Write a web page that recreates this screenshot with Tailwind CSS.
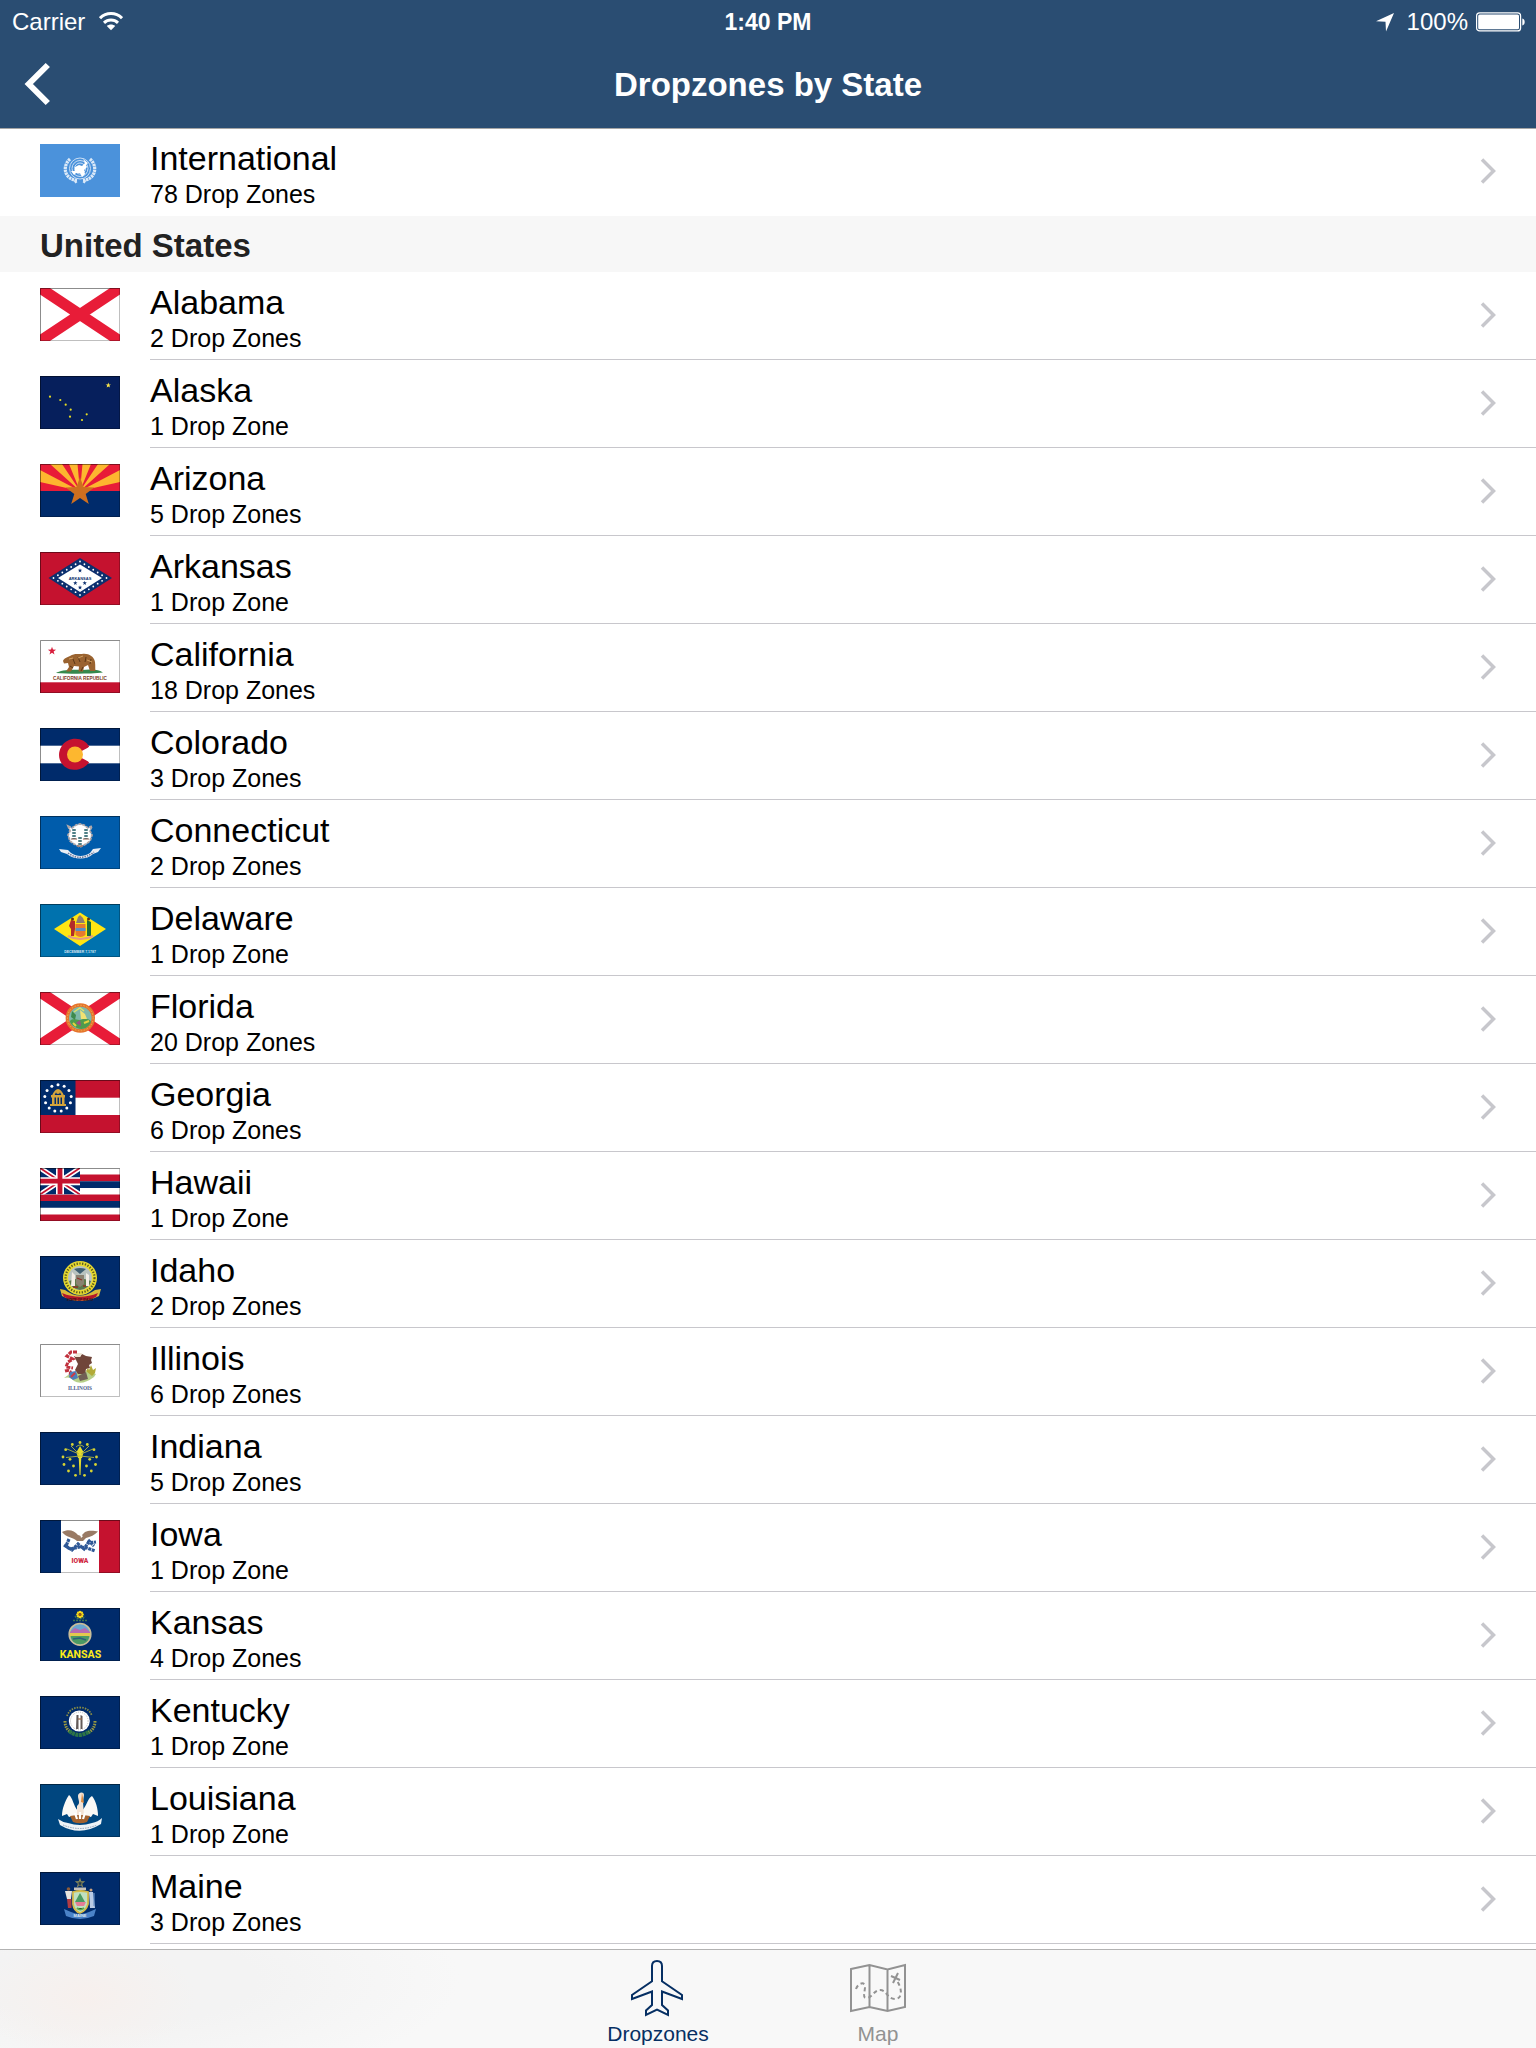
<!DOCTYPE html>
<html lang="en">
<head>
<meta charset="utf-8">
<meta name="viewport" content="width=device-width, initial-scale=1">
<title>Dropzones by State</title>
<script src="https://cdn.jsdelivr.net/npm/@tailwindcss/browser@4"></script>
</head>
<body class="flex min-h-screen flex-col bg-white font-['Liberation_Sans',Arial,sans-serif] text-black">

<header class="sticky top-0 z-10 bg-[#2a4d72] text-white shadow-[0_1px_0_#a5a5a5]">
  <div class="grid h-10 grid-cols-3 items-center px-3 pt-0.5 text-[24px] leading-10">
    <div class="flex items-center gap-3.5">
      <span>Carrier</span>
      <svg class="h-5 w-6" viewBox="0 0 24 20" fill="none" stroke="#fff" stroke-width="3" role="img" aria-label="Wi-Fi">
        <path d="M1 6.200C7.200 0 16.800 0 23 6.200"/>
        <path d="M5 10.800C9 7 15 7 19 10.800"/>
        <path d="M7.800 14C10.200 12 13.800 12 16.200 14L12 18.300Z" fill="#fff" stroke="none"/>
      </svg>
    </div>
    <div class="text-center text-[23px] font-bold">1:40 PM</div>
    <div class="flex items-center justify-end gap-2">
      <svg class="mr-1 size-5" viewBox="0 0 20 20" fill="#fff" role="img" aria-label="Location"><path d="M19 1L11 19.500L10.500 9.700L1 9.200Z"/></svg>
      <span>100%</span>
      <svg class="-mr-0.5 h-5 w-[50px]" viewBox="0 0 50 20" role="img" aria-label="Battery full">
        <rect x="0.600" y="0.900" width="44" height="18" rx="3" fill="none" stroke="#fff" stroke-width="1.200"/>
        <rect x="2.200" y="2.500" width="40.800" height="14.800" rx="1.500" fill="#fff"/>
        <path d="M46.300 6.500C49.500 7 49.500 13 46.300 13.500Z" fill="#fff"/>
      </svg>
    </div>
  </div>
  <div class="grid h-22 grid-cols-[80px_1fr_80px] items-center">
    <button type="button" aria-label="Back" class="flex h-22 items-center pl-6">
      <svg class="h-11 w-7" viewBox="0 0 28 44" fill="none" stroke="#fff" stroke-width="6"><path d="M23.800 3L4.800 22L23.800 41"/></svg>
    </button>
    <h1 class="pt-0.5 text-center text-[33px] leading-[86px] font-bold">Dropzones by State</h1>
  </div>
</header>

<main class="flex-1">
  <ul id="international"></ul>
  <h2 class="bg-[#f7f7f7] px-10 pt-1 text-[33px] leading-[52px] font-bold text-[#222]">United States</h2>
  <ul id="states"></ul>
</main>

<nav class="sticky bottom-0 flex justify-center gap-[68px] border-t border-[#b2b2b2] bg-[#f8f8f8] bg-[radial-gradient(110px_60px_at_86px_48px,#f7f0ed_0%,#f7f0ed00_100%),radial-gradient(340px_110px_at_120px_30px,#f3f3f3_0%,#f3f3f3_40%,#f8f8f8_100%)] pt-2 pb-0.5 text-[21px] leading-6">
  <a href="#dropzones" aria-current="page" class="flex w-[152px] flex-col items-center gap-1 text-[#062f63]">
    <svg class="size-[60px]" viewBox="0 0 60 60" fill="none" stroke="currentColor" stroke-width="2">
      <path d="M29 3C25.500 3 24 5.500 24 8V23.300L4 37V41L24 33.500V47L18 52.500V57L29 51.500L40 57V52.500L34 47V33.500L54 41V37L34 23.300V8C34 5.500 32.500 3 29 3Z"/>
    </svg>
    <span>Dropzones</span>
  </a>
  <a href="#map" class="flex w-[152px] flex-col items-center gap-1 text-[#929292]">
    <svg class="size-[60px]" viewBox="0 0 60 60" fill="none" stroke="currentColor" stroke-width="2">
      <path d="M3 11L21.500 7L39.500 11.500L57 7V49L39.500 53L21.500 49L3 53ZM21.500 7V49M39.500 11.500V53"/>
      <path d="M8 31C10 25 17 23 17 29C17 34 14 40 18.500 40C24 40 26 32 32 32C39 32 39 41 47 41C55 41 54 30 49 23" stroke-dasharray="4 3"/>
      <path d="M43 18L52 22M50 15L45 25"/>
    </svg>
    <span>Map</span>
  </a>
</nav>

<script>
const NAVY = '#002b6b';
const star = (cx, cy, r, fill) => {
  const pts = [];
  for (let i = 0; i < 10; i++) {
    const a = -Math.PI / 2 + i * Math.PI / 5, q = i % 2 ? r * 0.4 : r;
    pts.push((cx + q * Math.cos(a)).toFixed(1) + ',' + (cy + q * Math.sin(a)).toFixed(1));
  }
  return `<polygon points="${pts.join(' ')}" fill="${fill}"/>`;
};
const dots = (list, r, fill) => list.map(([x, y]) => `<circle cx="${x}" cy="${y}" r="${r}" fill="${fill}"/>`).join('');
const ring = (n, cx, cy, r, from = -90) => Array.from({ length: n }, (_, i) => {
  const a = (from + i * 360 / n) * Math.PI / 180;
  return [cx + r * Math.cos(a), cy + r * Math.sin(a)];
});
const bg = c => `<rect width="80" height="53" fill="${c}"/>`;
const saltire = bg('#fff') + '<path d="M0 0L80 53M80 0L0 53" stroke="#e81c38" stroke-width="11"/>';
const along = (pts, n) => pts.flatMap(([x, y], k) => {
  const [u, v] = pts[(k + 1) % pts.length];
  return Array.from({ length: n }, (_, i) => [x + (u - x) * i / n, y + (v - y) * i / n]);
});

const flags = {
  International: bg('#4b92db') + `
    <g fill="none" stroke="#c9def5" stroke-width="1"><circle cx="40" cy="24.500" r="10.500"/><circle cx="40" cy="24.500" r="8"/><circle cx="40" cy="24.500" r="5.500"/></g>
    <path d="M30 15C22 22 24 35 37 36.500L34 38.500M50 15C58 22 56 35 43 36.500L46 38.500" fill="none" stroke="#dbe9f8" stroke-width="3.200" stroke-dasharray="2.400 0.600"/>
    <path d="M35 23L39 21L42 22L45 19L47 23L44 26L45 30L42 33L40 29L36 29L34 31L31 27L35 27ZM43 15L48 19L46 21Z" fill="#fff"/>`,
  Alabama: saltire,
  Alaska: bg('#061f5c') + star(68.3, 9.3, 2.8, '#ffe94a') + dots([[10, 20.7], [20.3, 24], [25.700, 28.700], [30.700, 33.700], [30, 40.700], [42, 44], [46.700, 38.300]], 1.1, '#e6dc24'),
  Arizona: bg('#e81c38') + `
    <path d="M40 27L0 6V18ZM40 27L10 0H22ZM40 27L29 0H37.500ZM40 27L42.500 0H51ZM40 27L58 0H70ZM40 27L80 6V18Z" fill="#fdb72f"/>
    <rect y="27" width="80" height="26" fill="${NAVY}"/>` + star(40, 28, 15, '#ce6f1f'),
  Arkansas: bg('#c5122f') + `
    <path d="M40 6L72 26L40 46.500L8.500 26Z" fill="#0c2f6e"/><path d="M40 12.500L62 26L40 40L18 26Z" fill="#fff"/>` +
    dots(along([[40, 9.500], [66.500, 26], [40, 43], [13.500, 26]], 6), 0.9, '#fff') +
    '<text x="40" y="27.500" text-anchor="middle" font-size="4" font-weight="700" fill="#0c2f6e">ARKANSAS</text>' +
    star(40, 18.500, 2.3, '#0c2f6e') + star(35.300, 31, 2.3, '#0c2f6e') + star(44.700, 31, 2.3, '#0c2f6e') + star(40, 35.500, 2.3, '#0c2f6e'),
  California: bg('#fff') + `<rect y="42.300" width="80" height="11" fill="#c5122f"/>` + star(12, 11, 4.3, '#d81e3c') + `
    <path d="M16 33C20 30 32 29 42 30C52 28.500 60 30 63 32.500C50 34 30 34 16 33Z" fill="#35894d"/>
    <path d="M23 21C24 18 27 17.500 30 16C35 12.500 39 14.500 42 14C48 13 54 16 55 22C55.500 26 55 28 55.500 31H50L48 25L44 27L43 31.500H38.500L39 26.500L34 26L31 31.500H26L29 27L28 23L24 23.500Z" fill="#9a6330"/>
    <path d="M33 19L35 24M38 17L40 22M46 17L45 22M51 19L50 24M30 26L33 28M43 27L41 31" stroke="#5b3716" stroke-width="1"/>
    <path d="M38 18L43 16M47 20L52 22M29 19L33 18" stroke="#d1a163" stroke-width="1"/>
    <text x="40" y="39.500" text-anchor="middle" font-size="4.700" font-weight="700" fill="#7c3722">CALIFORNIA REPUBLIC</text>`,
  Colorado: bg(NAVY) + `<rect y="17.700" width="80" height="17.600" fill="#fff"/>
    <path d="M49.300 19C44 8.500 28 8 21.500 18.500C15 29 22 41.500 34 41.800C40.500 42 46 39 49.300 34L35 26.500Z" fill="#c5122f"/><path d="M49.500 18.500L40 26.500L49.500 34.500Z" fill="#fff"/><circle cx="35" cy="26.500" r="8" fill="#fdb72f"/>`,
  Connecticut: bg('#005cab') + `
    <path d="M28 10L32 12L36 9L40 8L44 9L48 12L52 10L50 15L52 19L50 25L46 28L40 31L34 28L30 25L28 19L30 15Z" fill="#fff" stroke="#b0a7a8" stroke-width="1.800" stroke-dasharray="3 1"/>
    <path d="M34 13V23M46 13V23M40 21V30" stroke="#4f7f86" stroke-width="3.500" stroke-dasharray="2 1"/><path d="M31 23H37M43 23H49M37 30H43" stroke="#8c5a4d" stroke-width="1"/>
    <path d="M19 33L28 34L31 37C37 41 44 41 50 37L53 33L61 32L58 36L53 38C47 44 34 44 27 38L21 36Z" fill="#e9eef5"/><path d="M28 37C36 43 45 43 54 36" stroke="#6b789c" stroke-width="1.500" fill="none" stroke-dasharray="1.500 1"/>`,
  Delaware: bg('#0072ae') + `
    <path d="M40 8.500L66 25L40 42L14 25Z" fill="#ffe512"/>
    <path d="M35.500 20H45.500V31Q40.500 35 35.500 31Z" fill="#e67a2f"/><path d="M35.500 24H45.500V27H35.500Z" fill="#5c8fc4"/><path d="M36 19L38 13L40 11L43 14L45 19Z" fill="#8e7d70"/>
    <path d="M31 16L35 17V25L34 32H31V25L29 22Z" fill="#b32b2a"/><path d="M47 16L51 18L51 32H47V24Z" fill="#1e6b3b"/><circle cx="32.500" cy="15" r="1.500" fill="#5b3316"/><circle cx="48.500" cy="15" r="1.500" fill="#5b3316"/>
    <path d="M28 32Q40 38 53 32" stroke="#e49a85" stroke-width="2" fill="none"/>
    <text x="40" y="48.500" text-anchor="middle" font-size="3.500" font-weight="700" fill="#d6e6f2">DECEMBER 7,1787</text>`,
  Florida: saltire + `<circle cx="40.300" cy="26" r="14.700" fill="#e5732c"/><circle cx="40.300" cy="26" r="12.800" fill="none" stroke="#f0b350" stroke-width="1" stroke-dasharray="1.500 1.500"/><circle cx="40.300" cy="26" r="11.300" fill="#7fb8a8"/>
    <path d="M30 29C34 25 38 30 43 27C47 26 51 28 51 30C48 37 42 38 37 36C33 34 30 32 30 29Z" fill="#4f9b4d"/><path d="M32 19L36 23L35 28L31 25Z" fill="#3e8a4d"/><path d="M40 18L45 22L47 27L41 27Z" fill="#f1e172"/><path d="M36 31L40 28L41 34Z" fill="#a04b86"/><path d="M44 31L49 29M33 31L36 34" stroke="#e7d23e" stroke-width="2"/><path d="M34 20L40 16L44 19" fill="none" stroke="#dbe36a" stroke-width="1.500"/>`,
  Georgia: bg('#c5122f') + `<rect x="35" y="17.700" width="45" height="17.300" fill="#fff"/><rect width="35.500" height="35" fill="${NAVY}"/>` + dots(ring(13, 18, 18, 13.300), 1.500, '#fff') + `
    <path d="M13 16Q18 4 23 16" stroke="#d3a43c" stroke-width="2.200" fill="none"/><path d="M11 15H25V17.500H11ZM12 17.500H14.500V25H12ZM16 17.500H17.500V25H16ZM19 17.500H20.500V25H19ZM22 17.500H24.500V25H22ZM10 24H26V26H10Z" fill="#d3a43c"/><circle cx="18" cy="12" r="2" fill="#d3a43c"/>`,
  Hawaii: bg('#fff') + `
    <path d="M0 6.600H80V13.200H0ZM0 26.500H80V33.100H0ZM0 46.400H80V53H0Z" fill="#c5122f"/><path d="M0 13.200H80V19.900H0ZM0 33.100H80V39.800H0Z" fill="${NAVY}"/>
    <svg width="40" height="26.500" viewBox="0 0 40 26.500"><rect width="40" height="26.500" fill="${NAVY}"/><path d="M0 0L40 26.500M40 0L0 26.500" stroke="#fff" stroke-width="5"/><path d="M0 0L40 26.500M40 0L0 26.500" stroke="#c5122f" stroke-width="1.800"/><path d="M20 0V26.500M0 13.200H40" stroke="#fff" stroke-width="8"/><path d="M20 0V26.500M0 13.200H40" stroke="#c5122f" stroke-width="4.800"/></svg>`,
  Idaho: bg(NAVY) + `
    <path d="M20 33L25 34Q40 45 55 34L61 33L59 40Q40 50 22 40Z" fill="#d9b93a"/><path d="M22 37Q40 44.500 58 37L56 41Q40 48.500 24 41Z" fill="#b3172b"/>
    <text x="40" y="45" text-anchor="middle" font-size="3.200" font-weight="700" fill="#3a1010">STATE OF IDAHO</text>
    <circle cx="40" cy="22" r="17" fill="#e6d92f"/><circle cx="40" cy="22" r="14.500" fill="none" stroke="#5b5a20" stroke-width="2.200" stroke-dasharray="1.300 1.500"/><circle cx="40" cy="22" r="12" fill="#b9c3bf"/>
    <path d="M29 25Q40 20 51 25Q49 33 40 34Q31 33 29 25Z" fill="#5d7a4b"/><path d="M36 19H44V28L40 31L36 28Z" fill="#8a8270"/><path d="M32 16L35 19V30H31ZM46 17L49 19L49 30H46Z" fill="#f4eee6"/><path d="M34 13Q40 11 46 13L40 18Z" fill="#3f5f71"/><path d="M37 22L42 24M33 31H38M43 30H46" stroke="#8d2e26" stroke-width="1.300"/>`,
  Illinois: bg('#fff') + `
    <path d="M24 34Q30 32 34 37Q42 42 54 33L56 30L48 27L31 29Z" fill="#b7cf88"/>
    <path d="M34 12L40 13L42 10L46 12L52 13L51 16L52 19L49 21L50 24L46 25L45 30H38L35 26L38 20Z" fill="#70453a"/><path d="M36 9L42 9L40 13L35 13Z" fill="#efe6d6"/>
    <path d="M37 8H31L27 12L33 15L28 18L26 23L33 24M25 27Q32 25 30 31" fill="none" stroke="#c0313d" stroke-width="3" stroke-dasharray="4 1"/>
    <path d="M30 28L36 27L38 34L33 36L29 33Z" fill="#4d7fba"/><path d="M31 33L35 29" stroke="#cf3b45" stroke-width="2"/><path d="M38 32L46 28L48 35L40 37Z" fill="#715f55"/><path d="M46 27L48 24L49 26L51 21L53 26L56 24L55 29L52 32Z" fill="#b2ab38"/>
    <text x="40" y="45.700" text-anchor="middle" font-size="5.300" font-weight="700" fill="#4a588c" font-family="Liberation Serif, serif">ILLINOIS</text>`,
  Indiana: bg(NAVY) + `
    <path d="M38.500 22H41.500L41 31L40.500 43H39.500L39 31ZM36.500 20L40 14L43.500 20L42 26H38Z" fill="#e3dc2f"/>
    <path d="M40 24L26 25.500M40 24L54 25.500M39 22L27 17M41 22L53 17M38 21L31 14M42 21L49 14M36 15Q40 11 44 15" stroke="#b1b53e" stroke-width="0.900" fill="none"/>` +
    dots([[40, 10.500], [32.300, 12.500], [47.300, 12.500], [25.700, 17.700], [54, 17.700], [23, 25], [56.500, 25], [24, 32.500], [55.500, 32.500], [28.500, 39], [51.300, 39], [35.500, 43.300], [44.500, 43.300], [30, 27.300], [49.700, 27.300], [33.500, 34], [46.500, 34]], 1.400, '#d6d332'),
  Iowa: bg('#fff') + `<rect width="21" height="53" fill="${NAVY}"/><rect x="59" width="21" height="53" fill="#c5122f"/>
    <path d="M22 12C28 9 34 10 38 15L41 16L45 12C49 10 55 11 58 11.500C55 15 50 17 46 18L43 21H37C33 17 27 18 22 12Z" fill="#997a64"/><path d="M40 14L43 16L41 18Z" fill="#fff"/>
    <path d="M29 19L26 26L32 30L38 24L44 29L48 23L56 22M24 25L30 29L40 27L47 28L55 31M48 20L54 26" fill="none" stroke="#2f5896" stroke-width="3.200" stroke-dasharray="3 0.700"/>
    <text x="40" y="43" text-anchor="middle" font-size="6.700" font-weight="900" fill="#cf2741" font-family="Roboto, Liberation Sans, sans-serif">IOWA</text>`,
  Kansas: bg(NAVY) + `
    <path d="M35 8L37 10.500H43L45 8M33 12.500H47" stroke="#3d7552" stroke-width="1.500" fill="none" stroke-dasharray="2 1"/>` + dots(ring(8, 40, 6.500, 2.500), 1.300, '#f6d91a') + `<circle cx="40" cy="6.500" r="1.500" fill="#9a5a13"/>
    <circle cx="40" cy="26.300" r="10.800" fill="#6aa6d0" stroke="#c9bd98" stroke-width="1.600"/><path d="M30 24L35 20L40 22L45 20L50 24V27H30Z" fill="#b66ab1"/><path d="M30 25H50V29H30Z" fill="#e3c84e"/><path d="M30.500 28H49.500Q48 36 40 36.300Q32 36 30.500 28Z" fill="#4a9a63"/><path d="M33 31L40 30L46 32" stroke="#2e5f78" stroke-width="1.500" fill="none"/>
    <text x="40.500" y="49.700" text-anchor="middle" font-size="10.600" font-weight="700" fill="#fdea1a" font-family="Roboto, Liberation Sans, sans-serif">KANSAS</text>`,
  Kentucky: bg(NAVY) + `
    <path d="M27 20Q30 11.500 39.500 11.500Q49 11.500 52 20" fill="none" stroke="#8c9044" stroke-width="1.800" stroke-dasharray="1.500 1.200"/><path d="M25 25Q25 34 33 37M55 25Q55 34 47 37" fill="none" stroke="#9a9a42" stroke-width="3" stroke-dasharray="1.500 1"/><path d="M29 35Q39 43 50 35" fill="none" stroke="#2c7546" stroke-width="4" stroke-dasharray="3 0.600"/>
    <circle cx="39.300" cy="25" r="10.500" fill="#fff"/><circle cx="39.300" cy="25" r="8.800" fill="none" stroke="#b9b9b9" stroke-width="1" stroke-dasharray="1 1"/>
    <path d="M36.500 19L38.500 19V33H36ZM40.500 19L42.500 20V33H40.500Z" fill="#625a59"/><path d="M38 23H42" stroke="#9b6b4e" stroke-width="1.300"/>`,
  Louisiana: bg('#00467f') + `
    <path d="M18 35Q22 38 28 39Q40 43 52 39Q58 38 62 34L61 40Q40 53 20 41Z" fill="#eef3f7"/><path d="M23 41Q40 48 57 41" fill="none" stroke="#8fa0b5" stroke-width="1" stroke-dasharray="1.500 1"/>
    <path d="M38 27C33 21 33 14 29 11C25 17 22 25 22 32L27 30L29 33L33 32L38 34ZM42 27C47 21 48 14 52 12C56 17 58 25 58 32L53 30L51 33L47 32L42 34Z" fill="#fbf9f6"/>
    <path d="M37 32V22C41 19 38 16 38 12C38 8 44 7 44 11L43 18L44 32Z" fill="#f4e4d6"/><path d="M42 9L44 19L41 18" fill="#e08a3c"/>
    <path d="M30 32Q40 30 50 32L47 38Q40 40.500 33 38Z" fill="#a4622e"/><path d="M35 29L37 35M40 28V35M45 29L43 35" stroke="#fff" stroke-width="2.200"/>`,
  Maine: bg(NAVY) + `
    <path d="M24 37L31 40Q40 44 49 40L56 37L54 44Q40 50 26 44Z" fill="#4b83c8"/><text x="40" y="45" text-anchor="middle" font-size="4" font-weight="700" fill="#dce7f5">MAINE</text>` + star(40, 11, 5.5, '#8e8f5a') + star(40, 11.5, 2.8, '#22384c') + `
    <rect x="34" y="15.500" width="12" height="2.500" fill="#c7c2ba"/>
    <path d="M33 20Q40 18 48 20V32Q46 39 40 41Q34 39 33 32Z" fill="#bfe0c0" stroke="#d6bb4a" stroke-width="1.800"/><path d="M40 21L45 30H35Z" fill="#4a9b62"/><path d="M35 30H46L44 34H37Z" fill="#e67e96"/><path d="M37 36Q40 39 44 36" stroke="#5ba84d" stroke-width="2"/>
    <circle cx="28.500" cy="17" r="1.800" fill="#8b5b3b"/><path d="M25 19H32L31 27H27Z" fill="#e8e4df"/><path d="M27 27H31.500V36H28Z" fill="#b13c43"/><circle cx="51" cy="18" r="1.500" fill="#caa17d"/><path d="M49 20H53L54 28L55 36H50Z" fill="#b9cbe5"/><path d="M54 21V34" stroke="#6791c6" stroke-width="1.200"/>`
};

const places = [
  ['International', 78], ['Alabama', 2], ['Alaska', 1], ['Arizona', 5], ['Arkansas', 1], ['California', 18], ['Colorado', 3],
  ['Connecticut', 2], ['Delaware', 1], ['Florida', 20], ['Georgia', 6], ['Hawaii', 1], ['Idaho', 2], ['Illinois', 6],
  ['Indiana', 5], ['Iowa', 1], ['Kansas', 4], ['Kentucky', 1], ['Louisiana', 1], ['Maine', 3]
];

const frame = `<path d="M0.500 53V0.500H80" fill="none" stroke="#000" stroke-opacity="0.450"/><path d="M79.500 1V52.500H1" fill="none" stroke="#000" stroke-opacity="0.250"/>`;

const row = ([name, count], last) => `
  <li>
    <a href="#${name.toLowerCase()}" class="flex h-22 gap-[30px] pl-10">
      <svg class="mt-4 h-[53px] w-20 shrink-0" viewBox="0 0 80 53" font-family="Liberation Sans, sans-serif" aria-hidden="true">${flags[name]}${name === 'International' ? '' : frame}</svg>
      <span class="flex flex-1 justify-between pr-[39px] ${last ? '' : 'border-b border-[#c8c7cc]'}">
        <span class="flex flex-col pt-2.5">
          <span class="text-[34px] leading-10">${name}</span>
          <span class="text-[25px] leading-8">${count} Drop Zone${count === 1 ? '' : 's'}</span>
        </span>
        <svg class="mt-7 h-[30px] w-[18px]" viewBox="0 0 18 30" fill="none" stroke="#c7c7cc" stroke-width="3.500" aria-hidden="true"><path d="M3 3.500L14.500 15L3 26.500"/></svg>
      </span>
    </a>
  </li>`;

document.getElementById('international').innerHTML = row(places[0], true);
document.getElementById('states').innerHTML = places.slice(1).map(p => row(p, false)).join('');
</script>
</body>
</html>
